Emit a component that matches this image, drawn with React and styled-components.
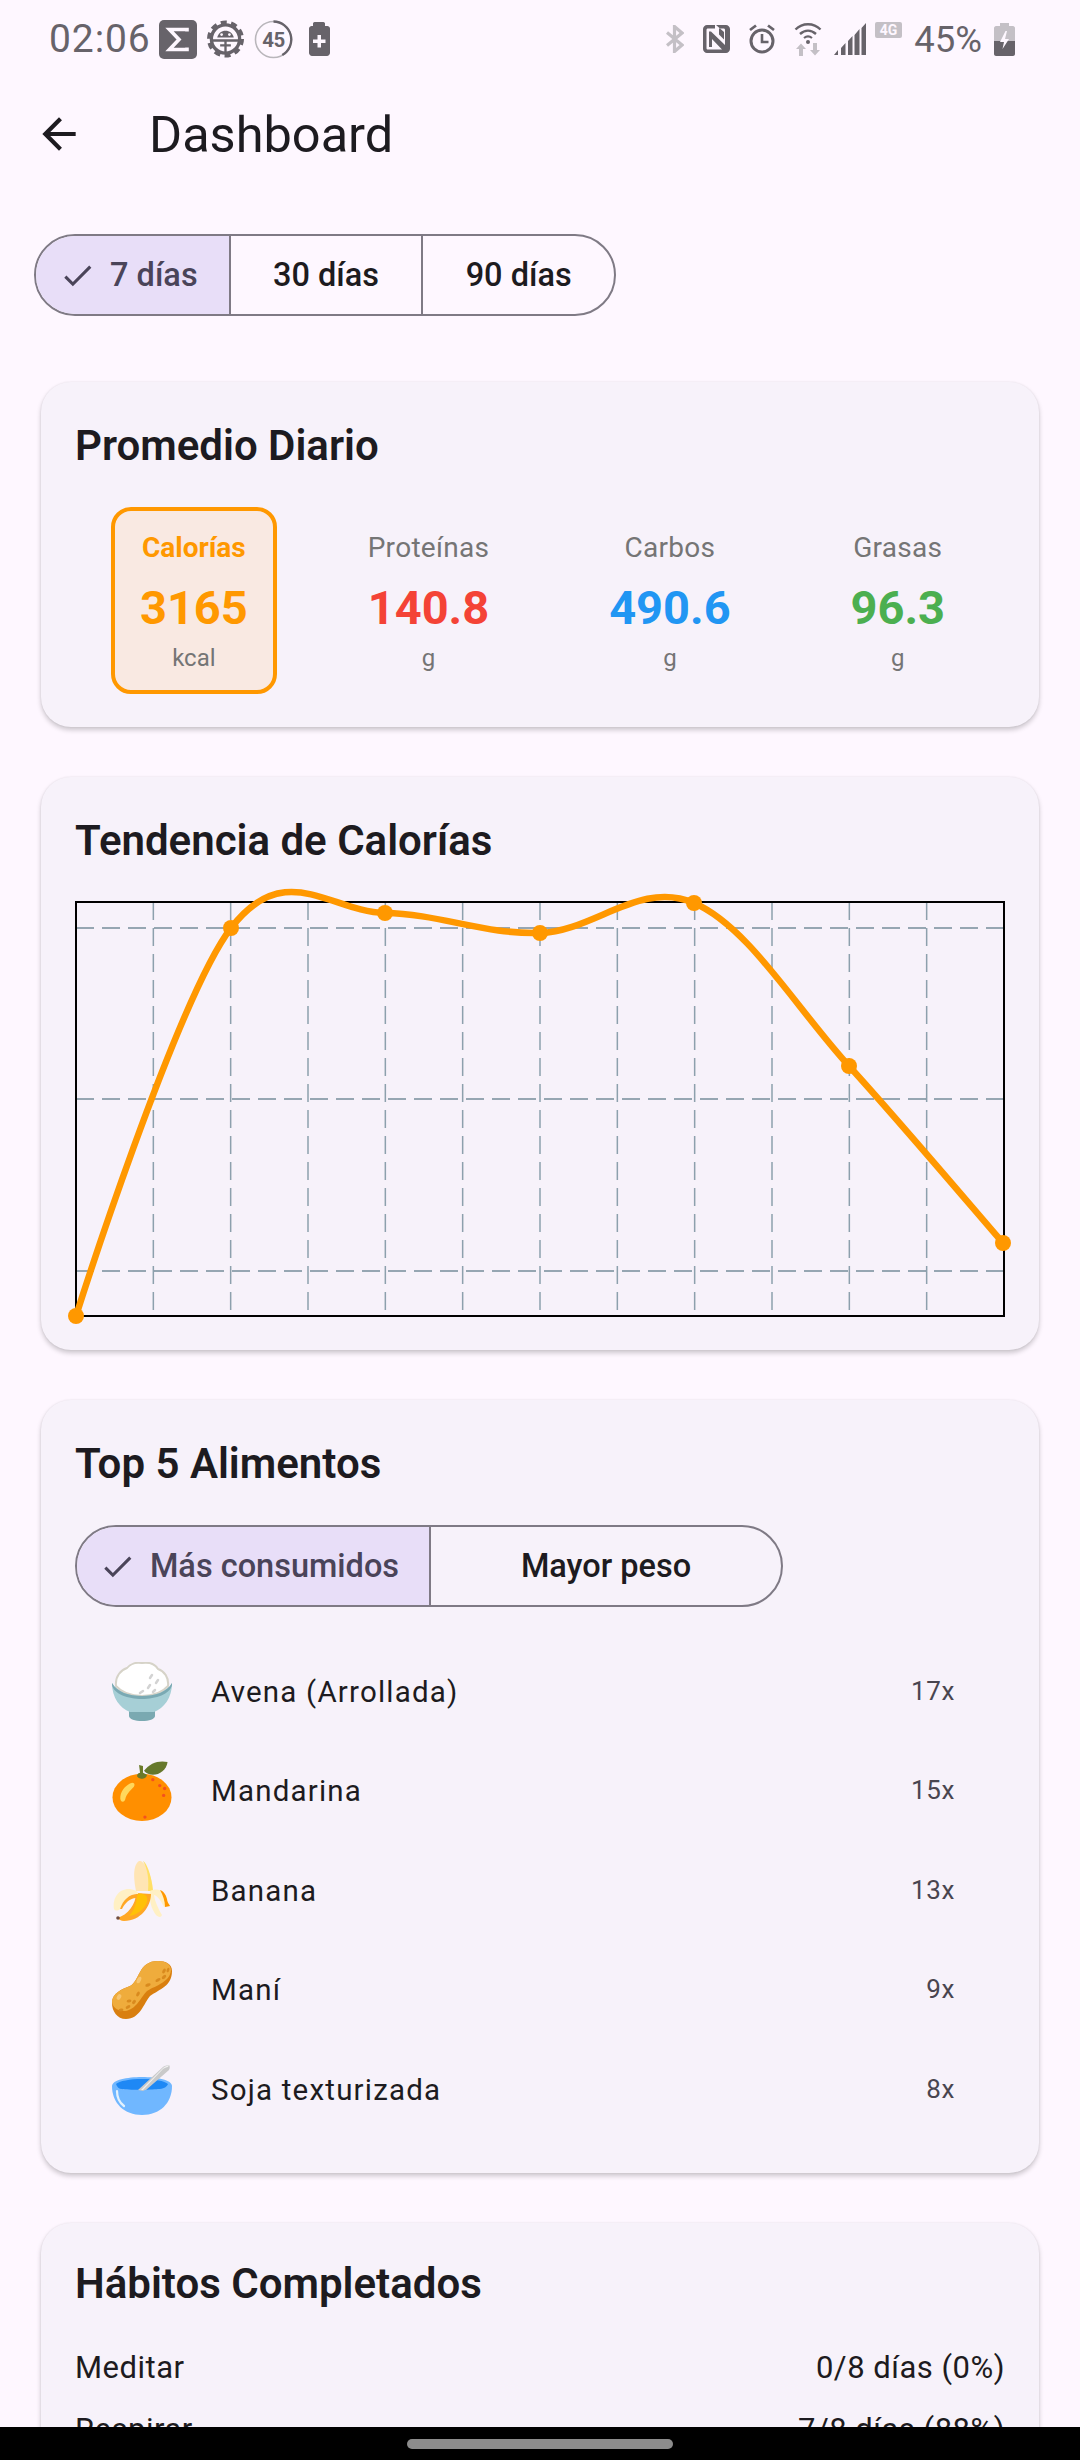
import React from 'react'
import styled, { createGlobalStyle } from 'styled-components'

const GlobalStyle = createGlobalStyle`
    html, body {
        margin: 0;
        padding: 0;
        background: #fef7ff;
        font-family: "Roboto", "Liberation Sans", sans-serif;
    }
`

const Page = styled.div`
    position: relative;
    width: 1080px;
    height: 2460px;
    overflow: hidden;
    background: #fef7ff;
    color: #1d1b20;
`

const StatusBar = styled.div`
    display: flex;
    justify-content: space-between;
    align-items: center;
    box-sizing: border-box;
    height: 78px;
    padding: 0 65px 0 49px;
    color: #67636a;
`

const StatusGroup = styled.div`
    display: flex;
    align-items: center;
    gap: ${props => props.$gap}px;
`

const Clock = styled.span`
    margin-right: -1.5px;
    font-size: 39px;
    letter-spacing: 0.9px;
`

const BatteryText = styled.span`
    font-size: 36.5px;
`

const AppBar = styled.header`
    display: flex;
    align-items: center;
    box-sizing: border-box;
    height: 112px;
    padding-left: 34px;
    gap: 65px;
`

const PageTitle = styled.h1`
    margin: 0;
    font-size: 50.5px;
    font-weight: 400;
`

const Filters = styled.div`
    padding: 44px 0 66px 34px;
`

const Segmented = styled.div`
    display: grid;
    grid-template-columns: repeat(${props => props.$count}, 1fr);
    box-sizing: border-box;
    width: ${props => props.$width}px;
    height: 82px;
    border: 2px solid #7f7a85;
    border-radius: 41px;
    overflow: hidden;
`

const Segment = styled.div`
    display: flex;
    align-items: center;
    justify-content: center;
    gap: 14px;
    padding-right: ${props => (props.$selected ? 8 : 0)}px;
    background: ${props => (props.$selected ? '#e8def8' : 'transparent')};
    color: ${props => (props.$selected ? '#4a4459' : '#1d1b20')};
    font-size: 32.5px;
    font-weight: 500;

    & + & {
        border-left: 2px solid #7f7a85;
    }
`

const Cards = styled.main`
    display: flex;
    flex-direction: column;
    gap: 50px;
    margin: 0 41px;
`

const Card = styled.section`
    padding: ${props => props.$top || 41}px 34px ${props => props.$bottom}px;
    border-radius: 30px;
    background: #f7f2fa;
    box-shadow: 0 3px 5px rgba(0, 0, 0, 0.2), 0 0 2px rgba(0, 0, 0, 0.08);
`

const CardTitle = styled.h2`
    margin: 0 0 38px;
    font-size: 42px;
    line-height: 46px;
    font-weight: 600;
    color: #1d1b20;
`

const Metrics = styled.div`
    display: flex;
    justify-content: space-around;
    padding-left: 5px;
`

const Metric = styled.div`
    display: flex;
    flex-direction: column;
    align-items: center;
    box-sizing: border-box;
    height: 187px;
    padding: 20px 25px 0;
    border: 4px solid ${props => (props.$selected ? props.$color : 'transparent')};
    border-radius: 20px;
    background: ${props => (props.$selected ? '#f9e9e2' : 'transparent')};
`

const MetricLabel = styled.div`
    font-size: 28px;
    line-height: 34px;
    letter-spacing: ${props => (props.$selected ? 0 : 0.3)}px;
    font-weight: ${props => (props.$selected ? 700 : 400)};
    color: ${props => (props.$selected ? props.$color : '#757575')};
`

const MetricValue = styled.div`
    margin-top: 15px;
    font-size: 47px;
    line-height: 56px;
    font-weight: 700;
    color: ${props => props.$color};
`

const MetricUnit = styled.div`
    margin-top: 7px;
    font-size: 24px;
    line-height: 30px;
    color: #757575;
`

const ChartSvg = styled.svg`
    display: block;
    overflow: visible;
    margin-left: 1px;
`

const FoodList = styled.ul`
    list-style: none;
    margin: 35px 0 0;
    padding: 0 50px 0 37px;
`

const FoodRow = styled.li`
    display: flex;
    align-items: center;
    gap: 39px;
    height: 99.5px;
`

const FoodName = styled.span`
    flex: 1;
    font-size: 29.5px;
    letter-spacing: 1.2px;
`

const FoodCount = styled.span`
    padding-bottom: 2px;
    font-size: 26px;
    letter-spacing: 0.6px;
    color: #49454f;
`

const HabitRow = styled.div`
    display: flex;
    justify-content: space-between;
    align-items: center;
    height: 44px;
    margin-bottom: 18px;
    font-size: 31px;
    letter-spacing: 0.5px;

    &:first-of-type {
        margin-top: 39px;
    }
`

const NavBar = styled.div`
    position: absolute;
    left: 0;
    right: 0;
    bottom: 0;
    display: flex;
    justify-content: center;
    box-sizing: border-box;
    height: 33px;
    padding-top: 12px;
    background: #000;
`

const NavPill = styled.div`
    width: 266px;
    height: 10px;
    border-radius: 5px;
    background: #8c8c8c;
`

const Icon = styled.svg`
    display: block;
    flex: none;
`

const CheckIcon = () => (
    <Icon width="37" height="37" viewBox="0 0 24 24" fill="currentColor">
        <path d="M9 16.17L4.83 12l-1.42 1.41L9 19 21 7l-1.41-1.41z" />
    </Icon>
)

const BackIcon = () => (
    <Icon width="50" height="50" viewBox="0 0 24 24" fill="#1d1b20">
        <path d="M20 11H7.83l5.59-5.59L12 4l-8 8 8 8 1.41-1.41L7.83 13H20v-2z" />
    </Icon>
)

const DARK = '#67636a'
const LIGHT = '#c4c0c6'
const BG = '#fef7ff'

const SigmaIcon = () => (
    <Icon width="38" height="39" viewBox="0 0 38 39">
        <rect width="38" height="39" rx="5" fill={DARK} />
        <path d="M28 11.5V9.5H10.5L20 19.5 10.5 29.5H28v-2" fill="none" stroke={BG} strokeWidth="3.6" />
    </Icon>
)

const GearIcon = () => (
    <Icon width="37" height="38" viewBox="0 0 38 38" fill="none" stroke={DARK}>
        <circle cx="19" cy="19" r="14.5" strokeWidth="3.4" />
        <circle cx="19" cy="19" r="16.500" strokeWidth="5" strokeDasharray="6 4.360" />
        <path d="M6 20.500h26M19 20.500v12M13.500 25.500h11" strokeWidth="2.400" />
        <path d="M10.500 17.500c1-4.500 4.500-7 8.500-7s7.500 2.500 8.500 7z" fill={DARK} stroke="none" />
        <circle cx="15" cy="14.500" r="1.400" fill={BG} stroke="none" />
        <circle cx="23" cy="14.500" r="1.400" fill={BG} stroke="none" />
    </Icon>
)

const TimerIcon = () => (
    <Icon width="39" height="39" viewBox="0 0 40 40" fill="none">
        <circle cx="20" cy="20" r="18.5" stroke="#b9b6bb" strokeWidth="1.6" />
        <path d="M20 1.5A18.5 18.5 0 0 1 29 36" stroke={DARK} strokeWidth="2.4" />
        <text x="20" y="27.5" textAnchor="middle" fontFamily="Roboto" fontWeight="700" fontSize="21" letterSpacing="-0.5" fill={DARK}>45</text>
    </Icon>
)

const ChargeIcon = () => (
    <Icon width="27" height="34" viewBox="1 0 27 34">
        <path d="M11 4V1.5C11 .8 11.8 0 12.5 0h9c.7 0 1.5.8 1.5 1.5V4h2.5c1 0 2.5 1 2.5 2.5V31c0 1.5-1.5 3-3 3H10c-1.5 0-3-1.5-3-3V6.5C7 5 8.5 4 9.500 4z" fill={DARK} />
        <path d="M15.500 13h3.500v4.500h4.500V21H19v4.500h-3.500V21H11v-3.500h4.500z" fill={BG} />
    </Icon>
)

const BluetoothIcon = () => (
    <Icon width="18" height="28" viewBox="0 0 18 28" fill="none" stroke={LIGHT} strokeWidth="3.2">
        <path d="M1 7.500l15 12.500-7.500 6.500V1.500L16 8 1 20.500" />
    </Icon>
)

const NfcIcon = () => (
    <Icon width="27" height="28" viewBox="0 0 27 28">
        <path d="M4 0h8v3.500H5c-1 0-1.500.5-1.500 1.500v18c0 1 .5 1.500 1.500 1.500h14L9 14v8H6V6.500h2L22 20V5c0-1-.5-1.500-1.500-1.500H16v6l5 5h0V7l-8-7h10c2 0 4 2 4 4v20c0 2-2 4-4 4H4c-2 0-4-2-4-4V4c0-2 2-4 4-4z" fill={DARK} />
    </Icon>
)

const AlarmIcon = () => (
    <Icon width="26" height="30" viewBox="0 0 26 30" fill="none" stroke={DARK} strokeWidth="3">
        <circle cx="13" cy="17" r="11" />
        <path d="M13 10v8h6.500" strokeWidth="2.6" />
        <path d="M1 6l6-4.500M25 6l-6-4.500" strokeWidth="2.800" />
    </Icon>
)

const WifiIcon = () => (
    <Icon width="28" height="34" viewBox="0 0 28 34" fill="none">
        <path d="M1.500 7.500C8.500 .5 19.500 .5 26.500 7.500" stroke={DARK} strokeWidth="2.4" />
        <path d="M6 12c5-4.500 11-4.500 16 0" stroke={DARK} strokeWidth="2.400" />
        <path d="M10 16c2.500-2 5.500-2 8 0" stroke={DARK} strokeWidth="2.200" />
        <circle cx="14" cy="20" r="2" fill={DARK} />
        <path d="M2 27l5-5.500 5 5.500H9v7H5v-7zM16 28h3v-7h4v7h3l-5 5.500z" fill={LIGHT} />
    </Icon>
)

const SignalIcon = () => (
    <Icon width="68" height="34" viewBox="0 0 68 34">
        <path d="M0 33l4-5v5zM7 33v-7l4.500-5v12zM14 33V19l4.500-5v19zM20.500 33V13l5-6v26zM27.500 33V6l4.500-5v32z" fill={DARK} />
        <rect x="41" y="0" width="27" height="16" rx="2" fill={LIGHT} />
        <text x="54.500" y="13" textAnchor="middle" fontFamily="Roboto" fontWeight="700" fontSize="14" fill={BG}>4G</text>
    </Icon>
)

const BatteryIcon = () => (
    <Icon width="21" height="33" viewBox="0 0 21 33">
        <path d="M6 3V0h9v3h4c1 0 2 1 2 2v13H0V5c0-1 1-2 2-2z" fill={LIGHT} />
        <path d="M0 18h21v13c0 1-1 2-2 2H2c-1 0-2-1-2-2z" fill={DARK} />
        <path d="M11.500 8L6 19h4l-1.500 7L15 16h-4l2-8z" fill={BG} />
    </Icon>
)

const RiceEmoji = () => (
    <Icon width="60" height="60" viewBox="0 0 60 60">
        <path d="M4 24C3 14 9 8 15 6c3-4 9-6 15-5 7-1 13 1 16 6 6 2 11 8 10 17-6 7-16 10-26 10S10 31 4 24z" fill="#fff" stroke="#d6d3c8" strokeWidth="2" />
        <path d="M40 13l-2 3M46 18l-2 3M38 23l-2 3M43 28l-2 2M31 29l-3 2" stroke="#d3d3d3" strokeWidth="2.500" strokeLinecap="round" />
        <path d="M17 49h26v5c0 3-6 5-13 5s-13-2-13-5z" fill="#7aa9b1" />
        <path d="M0 21c5 9 17 13 30 13s25-4 30-13c0 15-8 25-18 29H18C8 46 0 36 0 21z" fill="#a6cfd6" />
        <path d="M0 21c5 9 17 13 30 13s25-4 30-13v2c-2 9-16 14-30 14S2 32 0 23z" fill="#7aa9b3" />
    </Icon>
)

const TangerineEmoji = () => (
    <Icon width="60" height="60" viewBox="0 0 60 61">
        <ellipse cx="30" cy="37" rx="30" ry="24" fill="#ff8f00" />
        <path d="M8 36c1-7 6-12 12-14 3 0 3 3 1 5-3 3-7 7-8 12-1 4-6 3-5-3z" fill="#ffd85c" />
        <circle cx="41" cy="19" r="1.700" fill="#f4511e" />
        <circle cx="48" cy="25" r="1.700" fill="#f4511e" />
        <circle cx="53" cy="28" r="1.700" fill="#f4511e" />
        <circle cx="52" cy="35" r="1.700" fill="#f4511e" />
        <circle cx="33" cy="57" r="1.700" fill="#f4511e" />
        <path d="M27 4l4 1v7l4 2c0 3-3 4-5 4s-5-1-5-3 2-3 3-3z" fill="#6b7a2a" />
        <path d="M32 10C38 2 47-1 56 1c-1 8-8 13-15 13-3 0-7-1-9-4z" fill="#66782c" />
    </Icon>
)

const BananaEmoji = () => (
    <Icon width="60" height="60" viewBox="0 0 60 60">
        <path d="M27 0c6-1 13 15 14 30H24C22 20 20 5 27 0z" fill="#ffe5b4" />
        <path d="M31 0c4 2 9 16 10 30h-5C37 20 36 8 31 0z" fill="#ffe066" />
        <path d="M38 30c8-4 15 0 17 8 0 3 2 5 3 7l-6 1c-3-6-6-11-10-12 1 7 5 15 8 20-1 3-4 2-6 0-5-6-7-16-6-24z" fill="#fff0c4" />
        <path d="M48 29c5 2 6 6 7 9 0 3 2 5 3 7l-5 1c0-6-2-12-5-17z" fill="#ff9800" />
        <path d="M39 33c0 12-10 27-27 27-3 0-5-2-7-3 11-3 19-14 19-25z" fill="#ffa726" />
        <path d="M25 33c5-1 12 0 10 8-2 7-10 13-18 14 4-4 8-12 8-22z" fill="#ffc107" />
        <path d="M2 48C0 36 8 27 18 28c6 1 9 3 8 5-9 0-15 6-18 15-2 2-5 2-6 0z" fill="#fff0c4" />
        <path d="M8 48c3-9 9-15 18-15-1 2-1 3-2 4-6 0-11 5-14 11z" fill="#ffa726" />
        <circle cx="6" cy="57" r="1.800" fill="#6d4c41" />
    </Icon>
)

const PeanutEmoji = () => (
    <Icon width="60" height="60" viewBox="0 -1 60 60">
        <path d="M60 10c0 15-12 18-22 25-6 7-10 23-24 23C5 58 0 50 0 42c0-10 10-14 18-17C28 20 26 0 46 0c8 0 14 3 14 10z" fill="#d97f0f" />
        <path d="M59 9c-1 12-14 15-24 21-6 6-11 19-22 20C5 50 0 46 0 40c1-8 10-12 18-15C28 20 26 0 46 0c7 0 13 3 13 9z" fill="#efac3c" />
        <g fill="#d98a1e">
            <ellipse cx="52" cy="10" rx="1.500" ry="2.600" transform="rotate(30 52 10)" />
            <ellipse cx="56" cy="9" rx="1.300" ry="2.400" transform="rotate(20 56 9)" />
            <ellipse cx="52" cy="16" rx="1.500" ry="2.600" transform="rotate(50 52 16)" />
            <ellipse cx="46" cy="19" rx="1.500" ry="2.800" transform="rotate(60 46 19)" />
            <ellipse cx="36" cy="24" rx="1.500" ry="2.800" transform="rotate(70 36 24)" />
            <ellipse cx="26" cy="33" rx="1.500" ry="2.600" transform="rotate(30 26 33)" />
            <ellipse cx="17" cy="40" rx="1.500" ry="2.400" transform="rotate(80 17 40)" />
            <ellipse cx="22" cy="41" rx="1.500" ry="2.400" transform="rotate(40 22 41)" />
            <ellipse cx="16" cy="46" rx="1.500" ry="2.600" transform="rotate(60 16 46)" />
            <ellipse cx="9" cy="49" rx="1.500" ry="2.400" transform="rotate(80 9 49)" />
        </g>
        <ellipse cx="27" cy="19" rx="2" ry="3.500" transform="rotate(25 27 19)" fill="#f7c56f" />
        <ellipse cx="7" cy="36" rx="2" ry="3" transform="rotate(30 7 36)" fill="#f7c56f" />
    </Icon>
)

const BowlEmoji = () => (
    <Icon width="60" height="60" viewBox="0 -5 60 60">
        <path d="M0 21c0-6 15-9 30-9s30 3 30 9c0 17-12 29-30 29S0 38 0 21z" fill="#70b7ff" />
        <path d="M4 19c3-3 14-5 26-5s23 2 26 5c-1 3-5 5-10 5-8 1-30 1-36 0-3 0-5-2-6-5z" fill="#1e88f5" />
        <path d="M33 25l-2 1-5-1 25-23c1-1 4-2 6-2 1 1 1 3 0 5L34 25z" fill="#c9c9c9" />
        <path d="M29 25L51 3c1-1 3-2 6-3l-1 2c-2 0-3 1-5 2L31 25z" fill="#efefef" />
        <path d="M5 26c0 6 3 12 7 15" fill="none" stroke="#e3f2fd" strokeWidth="2.200" strokeLinecap="round" />
    </Icon>
)

const GRID_X = Array.from({ length: 11 }, (_, i) => ((i + 1) * 928) / 12)
const GRID_Y = [26, 197, 369]
const POINTS = [[0, 414], [155, 26], [309, 11], [464, 31], [618, 1], [773, 164], [927, 341]]

// same curve maths as a smoothed line chart, smoothness 0.35
function curvePath(points, smoothness = 0.35) {
    let d = `M${points[0][0]} ${points[0][1]}`
    let temp = [0, 0]
    for (let i = 1; i < points.length; i++) {
        const prev = points[i - 1]
        const cur = points[i]
        const next = points[i + 1] || cur
        const c1 = [prev[0] + temp[0], prev[1] + temp[1]]
        temp = [((next[0] - prev[0]) / 2) * smoothness, ((next[1] - prev[1]) / 2) * smoothness]
        const c2 = [cur[0] - temp[0], cur[1] - temp[1]]
        d += ` C${c1[0]} ${c1[1]} ${c2[0]} ${c2[1]} ${cur[0]} ${cur[1]}`
    }
    return d
}

const CalorieChart = () => (
    <ChartSvg width="928" height="414" viewBox="0 0 928 414">
        {GRID_Y.map(y => (
            <line key={y} x1="0" x2="928" y1={y} y2={y} stroke="#607d8b" strokeWidth="1.5" strokeOpacity="0.85" strokeDasharray="18 8" />
        ))}
        {GRID_X.map(x => (
            <line key={x} x1={x} x2={x} y1="0" y2="414" stroke="#607d8b" strokeWidth="1.5" strokeOpacity="0.7" strokeDasharray="18 8" />
        ))}
        <rect x="0" y="0" width="928" height="414" fill="none" stroke="#000" strokeWidth="2" />
        <path d={curvePath(POINTS)} fill="none" stroke="#ff9800" strokeWidth="6.5" strokeLinecap="round" />
        {POINTS.map(([x, y]) => (
            <circle key={x} cx={x} cy={y} r="8" fill="#ff9800" />
        ))}
    </ChartSvg>
)

const metrics = [
    { label: 'Calorías', value: '3165', unit: 'kcal', color: '#ff9800', selected: true },
    { label: 'Proteínas', value: '140.8', unit: 'g', color: '#f44336' },
    { label: 'Carbos', value: '490.6', unit: 'g', color: '#2196f3' },
    { label: 'Grasas', value: '96.3', unit: 'g', color: '#4caf50' },
]

const foods = [
    { name: 'Avena (Arrollada)', count: '17x', Emoji: RiceEmoji },
    { name: 'Mandarina', count: '15x', Emoji: TangerineEmoji },
    { name: 'Banana', count: '13x', Emoji: BananaEmoji },
    { name: 'Maní', count: '9x', Emoji: PeanutEmoji },
    { name: 'Soja texturizada', count: '8x', Emoji: BowlEmoji },
]

export default function App() {
    return (
        <Page>
            <GlobalStyle />
            <StatusBar>
                <StatusGroup $gap={10}>
                    <Clock>02:06</Clock>
                    <SigmaIcon />
                    <GearIcon />
                    <TimerIcon />
                    <ChargeIcon />
                </StatusGroup>
                <StatusGroup $gap={12}>
                    <StatusGroup $gap={19}>
                        <BluetoothIcon />
                        <NfcIcon />
                        <AlarmIcon />
                        <WifiIcon />
                    </StatusGroup>
                    <SignalIcon />
                    <BatteryText>45%</BatteryText>
                    <BatteryIcon />
                </StatusGroup>
            </StatusBar>

            <AppBar>
                <BackIcon />
                <PageTitle>Dashboard</PageTitle>
            </AppBar>

            <Filters>
                <Segmented $width={582} $count={3}>
                    <Segment $selected><CheckIcon />7 días</Segment>
                    <Segment>30 días</Segment>
                    <Segment>90 días</Segment>
                </Segmented>
            </Filters>

            <Cards>
                <Card $bottom={33}>
                    <CardTitle>Promedio Diario</CardTitle>
                    <Metrics>
                        {metrics.map(m => (
                            <Metric key={m.label} $selected={m.selected} $color={m.color}>
                                <MetricLabel $selected={m.selected} $color={m.color}>{m.label}</MetricLabel>
                                <MetricValue $color={m.color}>{m.value}</MetricValue>
                                <MetricUnit>{m.unit}</MetricUnit>
                            </Metric>
                        ))}
                    </Metrics>
                </Card>

                <Card $bottom={34}>
                    <CardTitle>Tendencia de Calorías</CardTitle>
                    <CalorieChart />
                </Card>

                <Card $bottom={33}>
                    <CardTitle>Top 5 Alimentos</CardTitle>
                    <Segmented $width={708} $count={2}>
                        <Segment $selected><CheckIcon />Más consumidos</Segment>
                        <Segment>Mayor peso</Segment>
                    </Segmented>
                    <FoodList>
                        {foods.map(({ name, count, Emoji }) => (
                            <FoodRow key={name}>
                                <Emoji />
                                <FoodName>{name}</FoodName>
                                <FoodCount>{count}</FoodCount>
                            </FoodRow>
                        ))}
                    </FoodList>
                </Card>

                <Card $top={38} $bottom={34}>
                    <CardTitle>Hábitos Completados</CardTitle>
                    <HabitRow><span>Meditar</span><span>0/8 días (0%)</span></HabitRow>
                    <HabitRow><span>Respirar</span><span>7/8 días (88%)</span></HabitRow>
                </Card>
            </Cards>

            <NavBar><NavPill /></NavBar>
        </Page>
    )
}
